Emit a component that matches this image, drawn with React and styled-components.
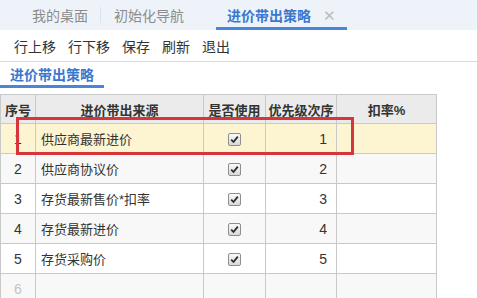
import React from "react";
import styled, { createGlobalStyle } from "styled-components";

const Global = createGlobalStyle`
  html, body { margin: 0; padding: 0; background: #fff; }
  body { font-family: "Liberation Sans", "Noto Sans CJK SC", sans-serif; overflow: hidden; }
`;

const Page = styled.div`
  position: relative;
  width: 477px;
  height: 298px;
  overflow: hidden;
`;

const TabBar = styled.div`
  display: flex;
  align-items: stretch;
  height: 30px;
  padding-left: 20px;
  background: #eef3f9;
`;

const Tab = styled.div`
  display: flex;
  align-items: center;
  padding: 0 ${(p) => p.$padRight ?? 12}px 0 ${(p) => p.$padLeft ?? 12}px;
  font-size: 14px;
  color: ${(p) => (p.$active ? "#3a78cf" : "#8c8c8c")};
  font-weight: ${(p) => (p.$active ? 700 : 400)};
  box-sizing: border-box;
  border-bottom: 3px solid ${(p) => (p.$active ? "#4a86d8" : "transparent")};
  padding-top: 3px;
`;

const TabSep = styled.div`
  width: 1px;
  background: #dde3ea;
  margin: 7px 0;
`;

const Close = styled.span`
  margin-left: 12px;
  color: #bcbcbc;
  font-size: 15px;
  font-weight: 400;
  line-height: 1;
`;

const Toolbar = styled.div`
  display: flex;
  align-items: center;
  gap: 12px;
  height: 31px;
  padding-left: 14px;
  border-bottom: 1px solid #dadada;
  font-size: 14px;
  color: #333;
`;

const ToolButton = styled.span`
  cursor: pointer;
`;

const SubTabs = styled.div`
  display: flex;
  height: 26px;
  margin-bottom: 6px;
`;

const SubTab = styled.div`
  display: flex;
  align-items: center;
  width: 104px;
  box-sizing: border-box;
  padding-left: 10px;
  font-size: 14px;
  font-weight: 700;
  color: #3a78cf;
  border-bottom: 3px solid #4a86d8;
`;

const Table = styled.table`
  border-collapse: collapse;
  table-layout: fixed;
  font-size: 13px;
  color: #333;
`;

const Th = styled.th`
  height: 28px;
  padding: 0;
  background: #ebebeb;
  border: 1px solid #c9c9c9;
  font-weight: 700;
  text-align: center;
  white-space: nowrap;
`;

const Tr = styled.tr`
  background: ${(p) => (p.$selected ? "#fdf4d2" : p.$alt ? "#f8f8f8" : "#fff")};
`;

const Td = styled.td`
  height: 29px;
  padding: 0 ${(p) => (p.$align === "right" ? "9px" : p.$align === "left" ? "5px" : "0")};
  border: 1px solid #c9c9c9;
  text-align: ${(p) => p.$align || "center"};
  color: ${(p) => (p.$muted ? "#c4c4c4" : "#333")};
  white-space: nowrap;
  font-size: ${(p) => (p.$num ? "14px" : "13px")};
`;

const Check = styled.span`
  display: inline-flex;
  align-items: center;
  justify-content: center;
  width: 11px;
  height: 11px;
  border: 1px solid #8e8e8e;
  border-radius: 2px;
  background: linear-gradient(#fafafa, #d8d8d8);
  vertical-align: middle;
`;

const Highlight = styled.div`
  position: absolute;
  left: 16px;
  top: 117px;
  width: 338px;
  height: 38px;
  box-sizing: border-box;
  border: 3px solid #d8343c;
  pointer-events: none;
`;

const rows = [
  { no: "1", src: "供应商最新进价", used: true, pri: "1" },
  { no: "2", src: "供应商协议价", used: true, pri: "2" },
  { no: "3", src: "存货最新售价*扣率", used: true, pri: "3" },
  { no: "4", src: "存货最新进价", used: true, pri: "4" },
  { no: "5", src: "存货采购价", used: true, pri: "5" },
  { no: "6", src: "", used: false, pri: "" },
];

function CheckMark() {
  return (
    <Check>
      <svg width="9" height="9" viewBox="0 0 9 9">
        <path d="M1.2 4.6 L3.5 7 L7.8 1.6" fill="none" stroke="#2b2b2b" strokeWidth="1.8" />
      </svg>
    </Check>
  );
}

export default function App() {
  return (
    <Page>
      <Global />
      <TabBar>
        <Tab>我的桌面</Tab>
        <TabSep />
        <Tab $padLeft={13} $padRight={32}>初始化导航</Tab>
        <Tab $active $padLeft={11} $padRight={11}>
          进价带出策略<Close>✕</Close>
        </Tab>
      </TabBar>
      <Toolbar>
        <ToolButton>行上移</ToolButton>
        <ToolButton>行下移</ToolButton>
        <ToolButton>保存</ToolButton>
        <ToolButton>刷新</ToolButton>
        <ToolButton>退出</ToolButton>
      </Toolbar>
      <SubTabs>
        <SubTab>进价带出策略</SubTab>
      </SubTabs>
      <Table>
        <colgroup>
          <col style={{ width: 35 }} />
          <col style={{ width: 168 }} />
          <col style={{ width: 62 }} />
          <col style={{ width: 71 }} />
          <col style={{ width: 100 }} />
        </colgroup>
        <thead>
          <tr>
            <Th>序号</Th>
            <Th>进价带出来源</Th>
            <Th>是否使用</Th>
            <Th>优先级次序</Th>
            <Th>扣率%</Th>
          </tr>
        </thead>
        <tbody>
          {rows.map((r, i) => (
            <Tr key={r.no} $selected={i === 0} $alt={i % 2 === 1}>
              <Td $num $muted={!r.src}>{r.no}</Td>
              <Td $align="left">{r.src}</Td>
              <Td>{r.used ? <CheckMark /> : null}</Td>
              <Td $align="right" $num>{r.pri}</Td>
              <Td />
            </Tr>
          ))}
        </tbody>
      </Table>
      <Highlight />
    </Page>
  );
}
